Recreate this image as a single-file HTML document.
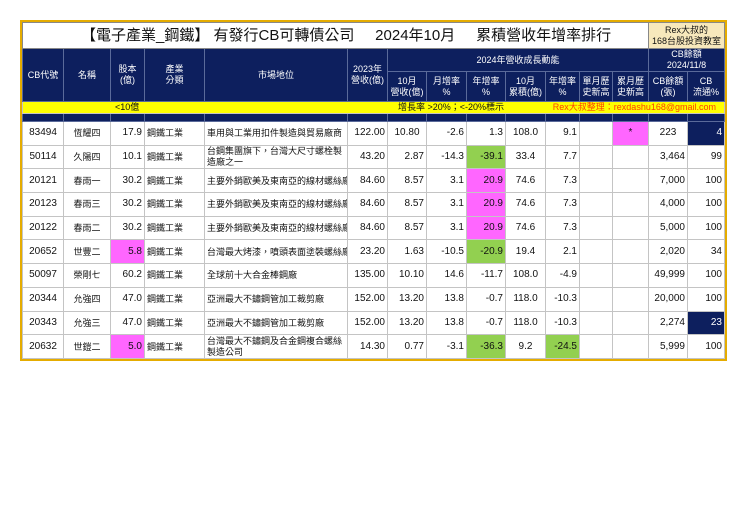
<!DOCTYPE html>
<html><head><meta charset="utf-8"><style>
body{margin:0;background:#fff;width:740px;height:523px;overflow:hidden;font-family:"Liberation Sans","Noto Sans CJK TC",sans-serif}
.wrap{position:absolute;left:20px;top:20px;border:2px solid #e5ac00;background:#fff}
table{border-collapse:collapse;table-layout:fixed;width:702px}
td{border:1px solid #c4c4c4;padding:0 2px;font-size:10px;color:#111;white-space:nowrap;overflow:hidden;text-align:center;line-height:12px}
tr.d td{height:22.7px}
.h td{background:#0d1f5e;color:#fff;border-color:#5a6a9a;font-size:9px;line-height:11px}
.r{text-align:right}.l{text-align:left;font-size:9px}
.pk{background:#ff66ff}.gr{background:#92d050}.nv{background:#0d1f5e;color:#fff}
.wr{white-space:normal;line-height:11px;font-size:9px}
</style></head><body><div class="wrap"><table>
<colgroup><col style="width:41px"><col style="width:47px"><col style="width:34px"><col style="width:60px"><col style="width:143px"><col style="width:40px"><col style="width:39px"><col style="width:40px"><col style="width:39px"><col style="width:40px"><col style="width:34px"><col style="width:33px"><col style="width:36px"><col style="width:39px"><col style="width:37px"></colgroup>
<tr style="height:26px"><td colspan="13" style="font-size:15px;white-space:pre;text-align:left;padding-left:58px;border-color:#888">【電子產業_鋼鐵】 有發行CB可轉債公司     2024年10月     累積營收年增率排行</td><td colspan="2" style="background:#f7e8bc;font-size:9px;line-height:11px;border-color:#888">Rex大叔的<br>168台股投資教室</td></tr>
<tr class="h" style="height:22px"><td rowspan="2">CB代號</td><td rowspan="2">名稱</td><td rowspan="2">股本<br>(億)</td><td rowspan="2">產業<br>分類</td><td rowspan="2">市場地位</td><td rowspan="2">2023年<br>營收(億)</td><td colspan="7">2024年營收成長動能</td><td colspan="2">CB餘額<br>2024/11/8</td></tr>
<tr class="h" style="height:30px"><td>10月<br>營收(億)</td><td>月增率<br>%</td><td>年增率<br>%</td><td>10月<br>累積(億)</td><td>年增率<br>%</td><td>單月歷<br>史新高</td><td>累月歷<br>史新高</td><td>CB餘額<br>(張)</td><td>CB<br>流通%</td></tr>
<tr style="height:12px;background:#ffff00"><td colspan="15" style="position:relative;font-size:9px;line-height:11px;border-color:#c4c4c4"><span style="position:absolute;left:92px;top:0">&lt;10億</span><span style="position:absolute;left:375px;top:0">增長率 &gt;20%；&lt;-20%標示</span><span style="position:absolute;right:8px;top:0;color:#ff4000">Rex大叔整理：rexdashu168@gmail.com</span></td></tr>
<tr class="h" style="height:8px"><td></td><td></td><td></td><td></td><td></td><td></td><td></td><td></td><td></td><td></td><td></td><td></td><td></td><td></td><td></td></tr>
<tr class="d"><td>83494</td><td style="font-size:9px">恆耀四</td><td class="r">17.9</td><td class="l">鋼鐵工業</td><td class="l">車用與工業用扣件製造與貿易廠商</td><td class="r">122.00</td><td>10.80</td><td class="r">-2.6</td><td class="r">1.3</td><td>108.0</td><td class="r">9.1</td><td></td><td class="pk">*</td><td>223</td><td class="r nv">4</td></tr>
<tr class="d"><td>50114</td><td style="font-size:9px">久陽四</td><td class="r">10.1</td><td class="l">鋼鐵工業</td><td class="l wr">台鋼集團旗下，台灣大尺寸螺栓製造廠之一</td><td class="r">43.20</td><td class="r">2.87</td><td class="r">-14.3</td><td class="r gr">-39.1</td><td>33.4</td><td class="r">7.7</td><td></td><td></td><td class="r">3,464</td><td class="r">99</td></tr>
<tr class="d"><td>20121</td><td style="font-size:9px">春雨一</td><td class="r">30.2</td><td class="l">鋼鐵工業</td><td class="l">主要外銷歐美及東南亞的線材螺絲廠</td><td class="r">84.60</td><td class="r">8.57</td><td class="r">3.1</td><td class="r pk">20.9</td><td>74.6</td><td class="r">7.3</td><td></td><td></td><td class="r">7,000</td><td class="r">100</td></tr>
<tr class="d"><td>20123</td><td style="font-size:9px">春雨三</td><td class="r">30.2</td><td class="l">鋼鐵工業</td><td class="l">主要外銷歐美及東南亞的線材螺絲廠</td><td class="r">84.60</td><td class="r">8.57</td><td class="r">3.1</td><td class="r pk">20.9</td><td>74.6</td><td class="r">7.3</td><td></td><td></td><td class="r">4,000</td><td class="r">100</td></tr>
<tr class="d"><td>20122</td><td style="font-size:9px">春雨二</td><td class="r">30.2</td><td class="l">鋼鐵工業</td><td class="l">主要外銷歐美及東南亞的線材螺絲廠</td><td class="r">84.60</td><td class="r">8.57</td><td class="r">3.1</td><td class="r pk">20.9</td><td>74.6</td><td class="r">7.3</td><td></td><td></td><td class="r">5,000</td><td class="r">100</td></tr>
<tr class="d"><td>20652</td><td style="font-size:9px">世豐二</td><td class="r pk">5.8</td><td class="l">鋼鐵工業</td><td class="l">台灣最大烤漆，噴頭表面塗裝螺絲廠</td><td class="r">23.20</td><td class="r">1.63</td><td class="r">-10.5</td><td class="r gr">-20.9</td><td>19.4</td><td class="r">2.1</td><td></td><td></td><td class="r">2,020</td><td class="r">34</td></tr>
<tr class="d"><td>50097</td><td style="font-size:9px">榮剛七</td><td class="r">60.2</td><td class="l">鋼鐵工業</td><td class="l">全球前十大合金棒鋼廠</td><td class="r">135.00</td><td class="r">10.10</td><td class="r">14.6</td><td class="r">-11.7</td><td>108.0</td><td class="r">-4.9</td><td></td><td></td><td class="r">49,999</td><td class="r">100</td></tr>
<tr class="d"><td>20344</td><td style="font-size:9px">允強四</td><td class="r">47.0</td><td class="l">鋼鐵工業</td><td class="l">亞洲最大不鏽鋼管加工裁剪廠</td><td class="r">152.00</td><td class="r">13.20</td><td class="r">13.8</td><td class="r">-0.7</td><td>118.0</td><td class="r">-10.3</td><td></td><td></td><td class="r">20,000</td><td class="r">100</td></tr>
<tr class="d"><td>20343</td><td style="font-size:9px">允強三</td><td class="r">47.0</td><td class="l">鋼鐵工業</td><td class="l">亞洲最大不鏽鋼管加工裁剪廠</td><td class="r">152.00</td><td class="r">13.20</td><td class="r">13.8</td><td class="r">-0.7</td><td>118.0</td><td class="r">-10.3</td><td></td><td></td><td class="r">2,274</td><td class="r nv">23</td></tr>
<tr class="d"><td>20632</td><td style="font-size:9px">世鎧二</td><td class="r pk">5.0</td><td class="l">鋼鐵工業</td><td class="l wr">台灣最大不鏽鋼及合金鋼複合螺絲製造公司</td><td class="r">14.30</td><td class="r">0.77</td><td class="r">-3.1</td><td class="r gr">-36.3</td><td>9.2</td><td class="r gr">-24.5</td><td></td><td></td><td class="r">5,999</td><td class="r">100</td></tr>
</table></div></body></html>
